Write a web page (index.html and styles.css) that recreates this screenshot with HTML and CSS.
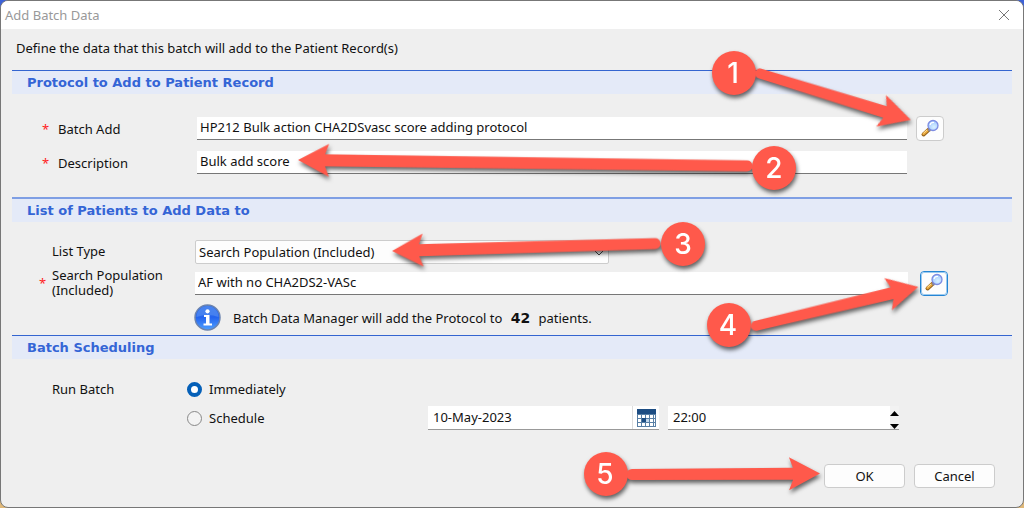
FILE: index.html
```html
<!DOCTYPE html>
<html lang="en">
<head>
<meta charset="utf-8">
<title>Add Batch Data</title>
<link rel="stylesheet" href="styles.css">
</head>
<body>
<svg class="symbols" aria-hidden="true">
  <defs>
    <radialGradient id="lens" cx="60%" cy="65%" r="65%"><stop offset="0" stop-color="#d9f1ff"/><stop offset="1" stop-color="#9dc6ff"/></radialGradient>
    <linearGradient id="ball" x1="0" y1="0" x2="0" y2="1"><stop offset="0" stop-color="#2f6fe8"/><stop offset=".5" stop-color="#2464ee"/><stop offset="1" stop-color="#4fa0ff"/></linearGradient>
    <symbol id="magnifier" viewBox="0 0 20 20">
      <path d="M9 10.500 3.500 15.500" stroke="#94621c" stroke-width="4" stroke-linecap="round"/>
      <path d="M7.500 11.500 3.500 15" stroke="#e9a93c" stroke-width="2.400" stroke-linecap="round"/>
      <path d="M7 11 3.500 14.200" stroke="#ffe0a0" stroke-width="1"/>
      <path d="m8 10.500 2 2" stroke="#888ca0" stroke-width="1.500"/>
      <circle cx="13" cy="6.500" r="5" fill="url(#lens)" stroke="#7d8ce2" stroke-width="1.300"/>
      <path d="M10 6q.8-3 4-2.500" fill="none" stroke="#fff" stroke-width="1.200"/>
    </symbol>
  </defs>
</svg>
<main class="dialog">
  <header class="titlebar">
    <h1 class="title">Add Batch Data</h1>
    <button class="close" type="button" aria-label="Close"><svg width="12" height="12" viewBox="0 0 12 12"><path d="m1 1 10 10M11 1 1 11" stroke="#777" stroke-width="1"/></svg></button>
  </header>
  <form class="content">
    <p class="intro">Define the data that this batch will add to the Patient Record(s)</p>

    <section class="section protocol">
      <h2 class="heading">Protocol to Add to Patient Record</h2>
      <div class="row">
        <span class="required">*</span>
        <label class="label" for="batch">Batch Add</label>
        <input class="field" id="batch" type="text" value="HP212 Bulk action CHA2DSvasc score adding protocol">
        <button class="lookup" type="button" aria-label="Find protocol"><svg width="20" height="20"><use href="#magnifier"/></svg></button>
      </div>
      <div class="row">
        <span class="required">*</span>
        <label class="label" for="description">Description</label>
        <input class="field" id="description" type="text" value="Bulk add score">
      </div>
    </section>

    <section class="section patients">
      <h2 class="heading heavy">List of Patients to Add Data to</h2>
      <div class="row">
        <span class="required"></span>
        <label class="label" for="list-type">List Type</label>
        <span class="picker">
          <select class="select" id="list-type"><option>Search Population (Included)</option></select>
          <svg class="chevron" width="10" height="6" viewBox="0 0 10 6"><path d="m1 1 4 4 4-4" fill="none" stroke="#444"/></svg>
        </span>
      </div>
      <div class="row population">
        <span class="required">*</span>
        <label class="label" for="population">Search Population (Included)</label>
        <input class="field" id="population" type="text" value="AF with no CHA2DS2-VASc">
        <button class="lookup focused" type="button" aria-label="Find population"><svg width="20" height="20"><use href="#magnifier"/></svg></button>
      </div>
      <div class="notice">
        <svg width="27" height="27" viewBox="0 0 27 27"><circle cx="13.500" cy="13.500" r="12.500" fill="url(#ball)" stroke="#6b83ae" stroke-width="1.500"/><path d="M2.500 13a11 11 0 0 1 22 0Q14 9 2.500 13" fill="#5f95f3" opacity=".55"/><circle cx="13.500" cy="7.300" r="2.100" fill="#fff"/><path d="M10 11h5.500v8.500H18v2H9.500v-2H12V13h-2z" fill="#fff"/></svg>
        <p class="notice-text">Batch Data Manager will add the Protocol to <strong class="count">42</strong> patients.</p>
      </div>
    </section>

    <section class="section scheduling">
      <h2 class="heading">Batch Scheduling</h2>
      <fieldset class="schedule">
        <legend class="legend">Run Batch</legend>
        <label class="choice"><input class="radio" type="radio" name="run" checked>Immediately</label>
        <div class="timing">
          <label class="choice"><input class="radio" type="radio" name="run">Schedule</label>
          <div class="date">
            <input class="bare" type="text" aria-label="Date" value="10-May-2023">
            <button class="calendar" type="button" aria-label="Open calendar"><svg width="19" height="18" viewBox="0 0 19 18"><path d="M0 0h19v18H0z" fill="#587fa5"/><path d="M0 0h19v5H0z" fill="#1d4d83"/><path d="M1 6h3v3H1zm4 0h3v3H5zm4 0h3v3H9zm4 0h3v3h-3zM1 10h3v3H1zm12 0h3v3h-3zM1 14h3v3H1zm4 0h3v3H5zm4 0h3v3H9zm4 0h3v3h-3zm4-8h1v3h-1zm0 4h1v3h-1zm0 4h1v3h-1z" fill="#fff"/><path d="M5 10h3v3H5zm4 0h3v3H9z" fill="#c3d8ec"/><path d="M5 9h4v4H5z" fill="#1d4d83"/></svg></button>
          </div>
          <div class="time">
            <input class="bare" type="text" aria-label="Time" value="22:00">
            <span class="spinner">
              <button class="spin" type="button" aria-label="Later"><svg width="9" height="5"><path d="m0 5 4.500-5L9 5z"/></svg></button>
              <button class="spin" type="button" aria-label="Earlier"><svg width="9" height="5"><path d="m0 0 4.500 5L9 0z"/></svg></button>
            </span>
          </div>
        </div>
      </fieldset>
    </section>

    <footer class="actions">
      <button class="button" type="button">OK</button>
      <button class="button" type="button">Cancel</button>
    </footer>
  </form>
</main>
<svg class="annotations" width="1024" height="508" viewBox="0 0 1024 508">
  <g class="arrows">
    <path transform="translate(755 72) rotate(17.100)" d="M5-5 136-6 132-16.500 163 0 132 16.500 136 6 5 5A5 5 0 0 1 5-5"/>
    <path transform="translate(752 166) rotate(180.760)" d="M5-5.500 427-6 423-16.500 454 0 423 16.500 427 6 5 5.500A5.500 5.500 0 0 1 5-5.500"/>
    <path transform="translate(660 243.500) rotate(178.400)" d="M5-5.500 241-6 237-16.500 268 0 237 16.500 241 6 5 5.500A5.500 5.500 0 0 1 5-5.500"/>
    <path transform="translate(751 327) rotate(-13.470)" d="M5-5 145-6 141-16.500 172 0 141 16.500 145 6 5 5A5 5 0 0 1 5-5"/>
    <path transform="translate(627 474.500) rotate(-.3)" d="M5-5.500 166-6 162-16.500 193 0 162 16.500 166 6 5 5.500A5.500 5.500 0 0 1 5-5.500"/>
    <circle cx="734" cy="73" r="22"/><circle cx="774" cy="168" r="22"/><circle cx="683" cy="244" r="22"/><circle cx="729" cy="325" r="22"/><circle cx="606" cy="474" r="22"/>
  </g>
  <g class="numbers">
    <text x="733" y="83">1</text><text x="774" y="178">2</text><text x="683" y="254">3</text><text x="728" y="335">4</text><text x="605" y="484">5</text>
  </g>
</svg>
</body>
</html>
```

FILE: styles.css
```css
* { box-sizing: border-box; }
body {
  position: relative;
  margin: 0;
  min-height: 100vh;
  display: flex;
  background: linear-gradient(#3d62d8 50%, #e0b878 50%);
  font: 13px/16px "Noto Sans", "DejaVu Sans", sans-serif;
  color: #111;
}
h1, h2, p { margin: 0; font-size: inherit; font-weight: normal; }
button, input, select { font: inherit; color: inherit; padding: 0; margin: 0; border: 0; }
svg { display: block; }
.symbols { position: absolute; width: 0; height: 0; }

.dialog {
  flex: 1;
  display: flex;
  flex-direction: column;
  overflow: hidden;
  background: #efefef;
  border: 1px solid #777;
  border-radius: 8px;
}
.titlebar {
  display: flex;
  align-items: center;
  justify-content: space-between;
  height: 28px;
  padding: 0 13px 0 4px;
  background: #fff;
}
.title { color: #999; }
.close { background: none; }
.content { padding: 11px 11px 0; }
.intro { padding-left: 4px; }

.section { display: flex; flex-direction: column; }
.protocol { margin-top: 14px; min-height: 127px; }
.patients { min-height: 138px; }
.heading {
  height: 24px;
  margin-bottom: 22px;
  padding: 4px 15px;
  background: #e4eaf8;
  border-top: 1px solid #3465d0;
  color: #3465d6;
  font: bold 13px/16px "DejaVu Sans", sans-serif;
}
.heading.heavy { height: 25px; margin-bottom: 17px; border-top: 2px solid #7f9fe4; }

.row { display: flex; align-items: center; min-height: 25px; margin-bottom: 9px; }
.required { width: 16px; margin-left: 30px; color: #f22; }
.label { width: 139px; }
.field {
  flex: 1;
  min-width: 0;
  height: 23px;
  padding: 0 3px 2px;
  background: #fff;
  border-bottom: 1px solid #777;
}
.protocol .field { margin-right: 105px; }
.protocol .lookup { margin: 0 68px 0 -96px; }
.lookup {
  display: grid;
  place-items: center;
  width: 28px;
  height: 25px;
  background: #fdfdfd;
  border: 1px solid #ccc;
  border-radius: 4px;
}
.lookup.focused { border: 1px solid #2585d4; outline: 1px solid #9ccbf0; outline-offset: -2px; margin: 0 64px 0 12px; }
.patients .required { width: 13px; margin-left: 27px; }
.patients .row { margin-bottom: 5px; }
.patients .row.population { margin-top: -1px; }
.patients .label { width: 143px; line-height: 15px; }
.picker { position: relative; flex: 0 1 414px; }
.select {
  appearance: none;
  width: 100%;
  height: 24px;
  padding: 0 3px;
  background: #fdfdfd;
  border: 1px solid #ccc;
  border-radius: 2px;
}
.chevron { position: absolute; right: 5px; top: 10px; }
.notice { display: flex; align-items: center; gap: 12px; margin: 1px 0 0 182px; }
.count { margin: 0 5px; font: bold 14px/16px "DejaVu Sans", sans-serif; }

.schedule { display: grid; grid-template-columns: 135px 1fr; row-gap: 5px; margin: 0; padding: 0 113px 0 40px; border: 0; }
.scheduling .heading { margin-bottom: 18px; }
.legend { float: left; padding: 0; line-height: 24px; }
.choice { display: flex; align-items: center; gap: 7px; height: 24px; }
.radio {
  appearance: none;
  width: 15px;
  height: 15px;
  background: #f3f3f3;
  border: 1px solid #888;
  border-radius: 50%;
}
.radio:checked { border: 4px solid #0560b8; background: #fff; }
.timing { grid-column: 2; display: flex; align-items: center; }
.timing .choice { width: 241px; }
.date, .time { display: flex; height: 24px; background: #fff; border-bottom: 1px solid #999; }
.date { flex: 231; margin-right: 9px; }
.time { flex: 231; }
.bare { flex: 1; width: 0; min-width: 0; padding: 0 5px 2px; background: none; }
.calendar { padding: 0 3px 0 4px; background: #fff; border-left: 1px solid #ddd; }
.spinner { display: flex; flex-direction: column; justify-content: space-between; padding-top: 5px; background: #f2f2f2; }
.spin { background: none; }
.actions { display: flex; justify-content: flex-end; gap: 9px; margin-top: 34px; padding-right: 17px; }
.button {
  width: 81px;
  height: 24px;
  background: #fdfdfd;
  border: 1px solid #ccc;
  border-radius: 4px;
}

.annotations { position: absolute; left: 0; top: 0; pointer-events: none; }
.arrows { fill: #ff594b; filter: drop-shadow(1px 3px 2px rgb(0 0 0 / 60%)); }
.numbers { fill: #fff; font: 500 28px Inter, "Liberation Sans", sans-serif; text-anchor: middle; }
```
